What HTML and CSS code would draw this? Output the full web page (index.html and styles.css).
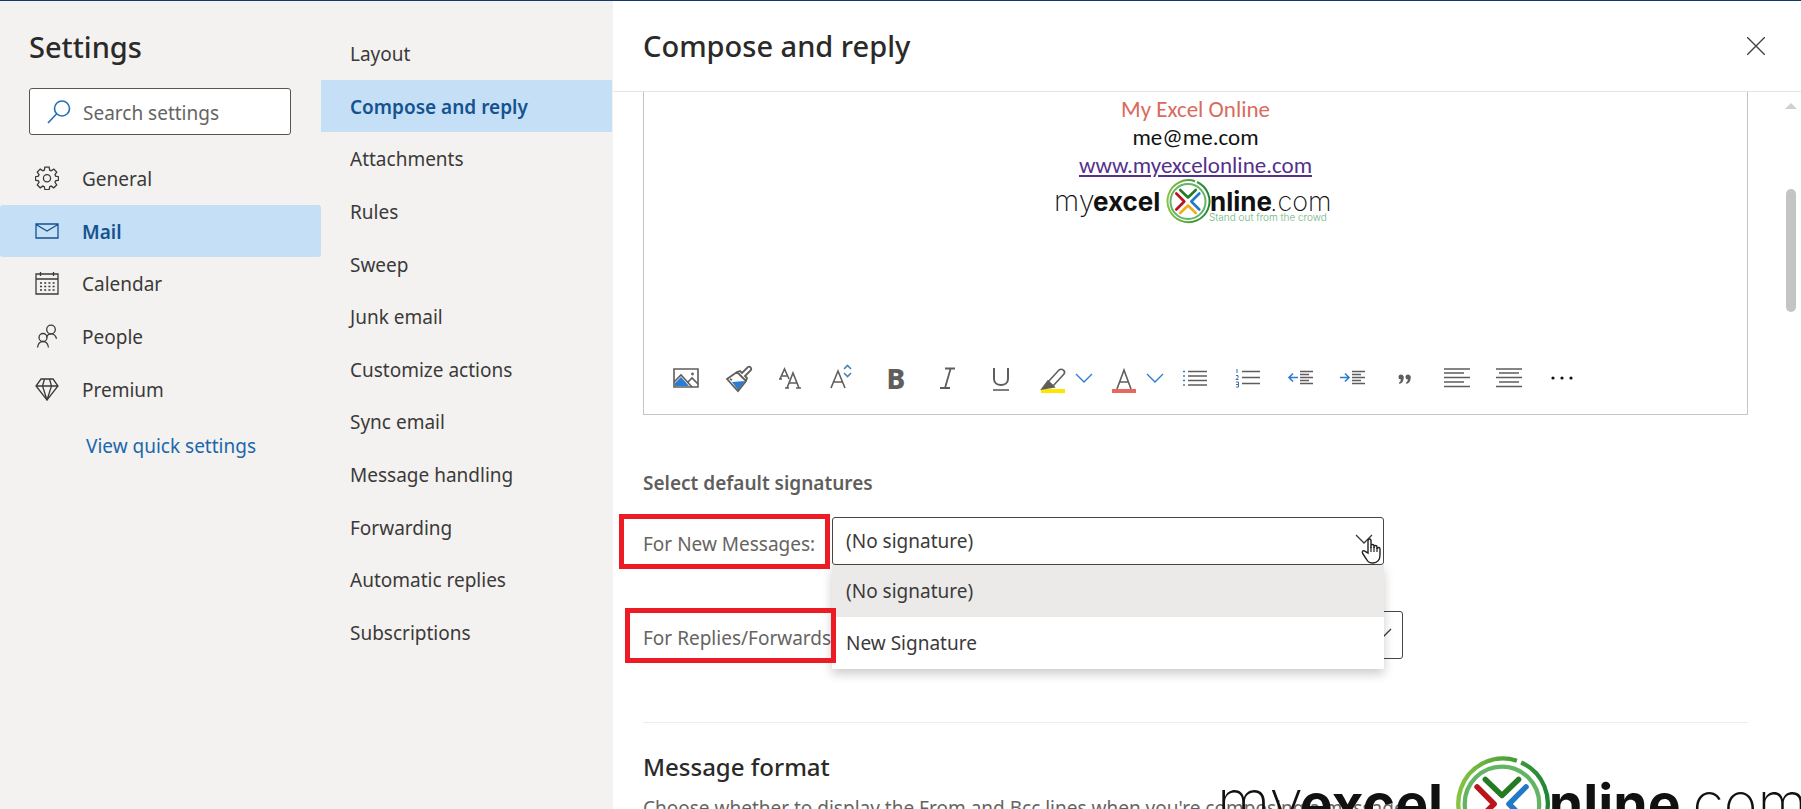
FILE: index.html
```
<!DOCTYPE html>
<html lang="en">
<head>
    <meta charset="UTF-8">
    <meta name="viewport" content="width=device-width, initial-scale=1.0">
    <title>Settings - Compose and reply</title>
    <link rel="stylesheet" href="styles.css">
</head>
<body>
    <!-- shared shapes -->
    <svg class="defs" width="0" height="0" aria-hidden="true">
        <defs>
            <linearGradient id="ring" x1="0" y1="0" x2="1" y2="0">
                <stop offset="0" stop-color="#86c440"/>
                <stop offset="1" stop-color="#1f8535"/>
            </linearGradient>
            <symbol id="chevron" viewBox="0 0 18 10">
                <path d="M1 1l8 8 8-8" fill="none" stroke="currentColor" stroke-width="1.3"/>
            </symbol>
            <symbol id="logo" viewBox="0 0 280 46">
                <g font-family="Inter, sans-serif" fill="#111">
                    <text x="-2" y="32" font-size="29" font-weight="200">my</text>
                    <text x="37" y="32" font-size="26" font-weight="700">excel</text>
                    <text x="154" y="32" font-size="26" font-weight="700">nline</text>
                    <text x="214" y="32" font-size="27" font-weight="200">.com</text>
                    <text x="153" y="42" font-size="10" font-weight="300" fill="#6cb57c">Stand out from the crowd</text>
                </g>
                <g fill="none">
                    <path d="M139 2.200A21 21 0 1 0 152 30A21 21 0 0 0 141 3" stroke="url(#ring)" stroke-width="2"/>
                    <circle cx="132" cy="22.500" r="17.500" stroke="#63b465" stroke-width="2"/>
                    <g stroke-width="2.600" stroke-linecap="round" stroke-linejoin="round">
                        <path d="M124.200 11l7.800 7.500 7.800-7.500" stroke="#257b22"/>
                        <path d="M120.300 14.500l8 8-8 8" stroke="#b9151c"/>
                        <path d="M143.300 14.500l-8 8 8 8" stroke="#2478c8"/>
                        <path d="M124.200 34l7.800-7.500 7.800 7.500" stroke="#f2ab1d"/>
                    </g>
                </g>
            </symbol>
        </defs>
    </svg>

    <div class="settings">
        <aside class="sidebar">
            <h1 class="title">Settings</h1>
            <label class="search">
                <svg class="search-icon" viewBox="0 0 24 24" fill="none" stroke="#2b6cb5" stroke-width="1.6"><circle cx="15" cy="8.500" r="7.500"/><path d="M9.700 13.800L1 23"/></svg>
                <input type="search" placeholder="Search settings" aria-label="Search settings">
            </label>
            <nav class="nav-list">
                <a class="nav-item" href="#general">
                    <svg viewBox="0 0 24 24"><path d="M9.900 1.200h4.200l.6 3 1.500.6 2.600-1.700 2.900 2.900-1.700 2.600.6 1.500 2.900.6v3.400l-2.900.7-.6 1.500 1.700 2.600-2.900 2.900-2.600-1.700-1.500.6-.6 2.900H9.900l-.6-2.900-1.500-.6-2.600 1.700-2.900-2.900L4 16.300l-.6-1.500-2.900-.7v-3.400l2.900-.6L4 8.600 2.300 6l2.900-2.900 2.600 1.700 1.500-.6z"/><circle cx="12" cy="12.200" r="3.600"/></svg>
                    <span>General</span>
                </a>
                <a class="nav-item active" href="#mail">
                    <svg viewBox="0 0 24 24"><path d="M1 5h22v14H1zM1 5.500l11 6.500 11-6.500"/></svg>
                    <span>Mail</span>
                </a>
                <a class="nav-item" href="#calendar">
                    <svg viewBox="0 0 24 24"><path d="M1 3h22v20H1zM1 8h22M5.500 1v4M18.500 1v4"/><path d="M5 12h15M5 15.500h15M5 19h15" stroke-dasharray="2 2.200" stroke-width="1.600"/></svg>
                    <span>Calendar</span>
                </a>
                <a class="nav-item" href="#people">
                    <svg viewBox="0 0 24 24"><circle cx="16" cy="5.500" r="4.300"/><circle cx="8" cy="13.500" r="4"/><path d="M11.500 13.500c.8-2.600 2.400-3.700 4.500-3.700 3 0 4.800 1.800 5.500 5M2.500 23.500c.5-3.700 2.500-6 5.500-6s5 2.300 5.500 6"/></svg>
                    <span>People</span>
                </a>
                <a class="nav-item" href="#premium">
                    <svg viewBox="0 0 24 24"><path d="M6 2h12l5 7-11 14L1 9zM1 9h22M9.500 2L7.500 9 12 23l4.500-14-2-7"/></svg>
                    <span>Premium</span>
                </a>
            </nav>
            <a class="quick-link" href="#quick">View quick settings</a>
        </aside>

        <nav class="subnav">
            <a href="#layout">Layout</a>
            <a class="active" href="#compose">Compose and reply</a>
            <a href="#attachments">Attachments</a>
            <a href="#rules">Rules</a>
            <a href="#sweep">Sweep</a>
            <a href="#junk">Junk email</a>
            <a href="#actions">Customize actions</a>
            <a href="#sync">Sync email</a>
            <a href="#handling">Message handling</a>
            <a href="#forwarding">Forwarding</a>
            <a href="#replies">Automatic replies</a>
            <a href="#subscriptions">Subscriptions</a>
        </nav>

        <main class="panel">
            <header class="panel-header">
                <h2 class="title">Compose and reply</h2>
                <button class="close" aria-label="Close">
                    <svg viewBox="0 0 18 18"><path d="M0 0l18 18M18 0L0 18" stroke="#444" stroke-width="1.4"/></svg>
                </button>
            </header>

            <div class="panel-body">
                <div class="content">
                    <section class="editor">
                        <div class="signature">
                            <p class="sig-name">My Excel Online</p>
                            <p>me@me.com</p>
                            <p><a href="#site">www.myexcelonline.com</a></p>
                            <svg class="sig-logo" role="img" aria-label="myexcelonline.com"><use href="#logo"/></svg>
                        </div>

                        <div class="toolbar">
                            <div class="tools tools-left">
                                <button aria-label="Insert picture"><svg viewBox="0 0 28 28"><path d="M2 5h24v18H2z"/><path d="M3 22v-3l6-6 8 9z" fill="#2b7cd3" stroke="none"/><path d="M2 18l7-7 11 12M16 18l4-4 6 6"/><circle cx="20.500" cy="10" r=".6"/></svg></button>
                                <button aria-label="Format painter"><svg viewBox="0 0 28 28"><path d="M7 18l13-1-7 9z" fill="#2b7cd3" stroke="none"/><path d="M2 15l10-7 3-1 2 2 6-6c2-1 4 1 3 3l-6 6 2 2-1 3-8 10zM12 8l9 9M5 15l2 1" stroke-width="1.800"/></svg></button>
                                <button aria-label="Font"><svg viewBox="0 0 28 28"><path d="M3 15L7.500 5 12 15M5 12h5M10 24l6-15 6 15M12 19h8M2 15h3M8 24h4M19 24h5"/></svg></button>
                                <button aria-label="Font size"><svg viewBox="0 0 28 28"><path d="M2 24L9 7l7 17M4.500 18h9"/><path d="M15 5l3.500-3.500L22 5M15 9l3.500 3.500L22 9" stroke="#4c83b6"/></svg></button>
                                <button class="bold" aria-label="Bold">B</button>
                                <button aria-label="Italic"><svg viewBox="0 0 28 28"><path d="M11 4.500h10M6 24h10M16.500 5l-5.500 19" stroke-width="1.800"/></svg></button>
                                <button aria-label="Underline"><svg viewBox="0 0 28 28"><path d="M7 4v11c0 8 14 8 14 0V4" stroke-width="2"/><path d="M6 26h16"/></svg></button>
                            </div>
                            <div class="split">
                                <button aria-label="Highlight"><svg viewBox="0 0 28 28"><path d="M2 25h24v4H2z" fill="#ffe600" stroke="none"/><path d="M9 18L20 6c3-2 7 1 5 4L14 22z"/><path d="M3 25l6-8 6 6z" fill="#605e5c"/></svg></button>
                                <button class="arrow" aria-label="Highlight colors"><svg><use href="#chevron"/></svg></button>
                            </div>
                            <div class="split">
                                <button aria-label="Font color"><svg viewBox="0 0 28 28"><path d="M2 25h24v4H2z" fill="#e8685e" stroke="none"/><path d="M7 25l7-19 7 19M10 18h8"/></svg></button>
                                <button class="arrow" aria-label="Font colors"><svg><use href="#chevron"/></svg></button>
                            </div>
                            <div class="tools tools-right">
                                <button aria-label="Bullets"><svg viewBox="0 -1 28 28"><path d="M7 6.500h19M7 11h19M7 15.500h19M7 20h19"/><path d="M2 6.500h2M2 11h2M2 15.500h2M2 20h2" stroke="#3f7fc0"/></svg></button>
                                <button aria-label="Numbering"><svg viewBox="0 -1 28 28"><path d="M8 6.500h18M8 12.500h18M8 18.500h18"/><path d="M3 4v4M2 10.500h2v2l-2 2h2.500M2 17h2.500v5H2M2 19.500h2" stroke="#3f6fa8" stroke-width="1"/></svg></button>
                                <button aria-label="Decrease indent"><svg viewBox="0 -1 28 28"><path d="M14 6.500h13M14 9.500h9M14 12.500h13M14 15.500h9M14 18.500h13"/><path d="M12 12.500H3M7 8.500l-4 4 4 4" stroke="#2b7cd3"/></svg></button>
                                <button aria-label="Increase indent"><svg viewBox="0 -1 28 28"><path d="M14 6.500h13M14 9.500h9M14 12.500h13M14 15.500h9M14 18.500h13"/><path d="M2 12.500h9M7 8.500l4 4-4 4" stroke="#2b7cd3"/></svg></button>
                                <button aria-label="Quote"><svg viewBox="0 -1 28 28"><g fill="#605e5c" stroke="none"><circle cx="10" cy="12" r="2.500"/><path d="M12.500 11c.5 5-1 7-4 8l-.5-1.500c1.500-1 2-2 2-4z"/><circle cx="17" cy="12" r="2.500"/><path d="M19.500 11c.5 5-1 7-4 8l-.5-1.500c1.500-1 2-2 2-4z"/></g></svg></button>
                                <button aria-label="Align left"><svg viewBox="0 0 28 28"><path d="M1 5h26M1 9h20M1 13.500h26M1 18h20M1 22.500h26"/></svg></button>
                                <button aria-label="Align center"><svg viewBox="0 0 28 28"><path d="M1 5h26M4 9h20M1 13.500h26M4 18h20M1 22.500h26"/></svg></button>
                                <button aria-label="More options"><svg viewBox="0 0 28 28"><g fill="#111" stroke="none"><circle cx="5" cy="14" r="1.600"/><circle cx="14" cy="14" r="1.600"/><circle cx="23" cy="14" r="1.600"/></g></svg></button>
                            </div>
                        </div>
                    </section>

                    <section class="defaults">
                        <h3 class="section-label">Select default signatures</h3>
                        <div class="field">
                            <label class="field-label" for="newMessages">For New Messages:</label>
                            <div class="select-box">
                                <select id="newMessages">
                                    <option>(No signature)</option>
                                    <option>New Signature</option>
                                </select>
                                <svg class="select-arrow"><use href="#chevron"/></svg>
                                <ul class="menu">
                                    <li><button class="selected">(No signature)</button></li>
                                    <li><button>New Signature</button></li>
                                </ul>
                                <svg class="pointer" viewBox="0 0 20 26"><path d="M7 15V3c0-2.700 3-2.700 3 0v7-2c0-2 3-2 3 0v2-1c0-2 3-2 3 0v2c0-2 3-2 3 0v6c0 5-3 8-7 8-3 0-5-1-6-3l-4-6c-2-3 1-4.500 3-2z" fill="#fff" stroke="#222" stroke-width="1.400"/><path d="M10 9v5M13 9v5M16 10v4" stroke="#222" stroke-width="1.200"/></svg>
                            </div>
                            <span class="mark"></span>
                        </div>
                        <div class="field field-replies">
                            <label class="field-label" for="replies">For Replies/Forwards:</label>
                            <div class="select-box">
                                <select id="replies">
                                    <option>(No signature)</option>
                                    <option>New Signature</option>
                                </select>
                                <svg class="select-arrow"><use href="#chevron"/></svg>
                            </div>
                            <span class="mark"></span>
                        </div>
                    </section>

                    <section class="format">
                        <h3>Message format</h3>
                        <p>Choose whether to display the From and Bcc lines when you're composing a message.</p>
                    </section>
                </div>
                <div class="scrollbar">
                    <span class="scroll-up"></span>
                    <span class="scroll-thumb"></span>
                </div>
            </div>
        </main>
    </div>
    <svg class="watermark" role="img" aria-label="myexcelonline.com"><use href="#logo"/></svg>
</body>
</html>
```
FILE: styles.css
```
:root {
    --accent: #14538f;
    --selected: #c5dff6;
    --text: #3b3a39;
    --muted: #666462;
    --border: #c4c4c4;
}

* {
    box-sizing: border-box;
}

body {
    margin: 0;
    height: 100vh;
    overflow: hidden;
    position: relative;
    font-family: 'Segoe UI', 'Noto Sans', sans-serif;
    font-size: 19px;
    line-height: 28px;
    color: var(--text);
    background: #fff;
    border-top: 1px solid #123a66;
}

h1, h2, h3, p, ul {
    margin: 0;
    padding: 0;
}

a {
    color: inherit;
    text-decoration: none;
}

button {
    border: none;
    background: none;
    padding: 0;
    font: inherit;
    color: inherit;
    cursor: pointer;
}

.defs {
    position: absolute;
}

.settings {
    display: flex;
    height: 100%;
}

.title {
    font-size: 29px;
    font-weight: 500;
    line-height: 40px;
    color: #2b2a29;
}

/* left column */
.sidebar {
    width: 321px;
    background: #f3f2f1;
    padding-top: 26px;
}

.sidebar .title {
    padding-left: 29px;
}

.search {
    display: flex;
    align-items: center;
    gap: 12px;
    height: 47px;
    margin: 21px 30px 17px 29px;
    padding: 0 16px 0 17px;
    background: #fff;
    border: 1px solid #555;
    border-radius: 3px;
}

.search-icon {
    flex: none;
    width: 24px;
    height: 24px;
}

.search input {
    flex: 1;
    min-width: 0;
    border: none;
    outline: none;
    padding: 2px 0 0;
    font: inherit;
    background: none;
}

.search input::placeholder {
    color: var(--muted);
}

.nav-list {
    display: grid;
    grid-auto-rows: 1fr;
    height: 263px;
}

.nav-item {
    display: flex;
    align-items: center;
    gap: 23px;
    padding-left: 35px;
}

.nav-item span {
    padding-top: 2px;
}

.nav-item svg {
    width: 24px;
    height: 24px;
    fill: none;
    stroke: currentColor;
    stroke-width: 1.3;
}

.active {
    background: var(--selected);
    color: var(--accent);
    font-weight: 600;
    border-radius: 3px;
}

.quick-link {
    display: block;
    margin: 17px 0 0 86px;
    color: #1c66ab;
}

.subnav {
    display: grid;
    grid-auto-rows: 1fr;
    width: 292px;
    height: 100%;
    padding: 26px 1px 151px 0;
    background: #f3f2f1;
}

.subnav a {
    display: flex;
    align-items: center;
    padding: 2px 0 0 29px;
}

.subnav .active {
    border-radius: 0;
}

/* right panel */
.panel {
    flex: 1;
    min-width: 0;
    display: flex;
    flex-direction: column;
}

.panel-header {
    flex: none;
    display: flex;
    align-items: center;
    justify-content: space-between;
    height: 91px;
    padding: 0 36px 0 30px;
    border-bottom: 1px solid #e4e4e4;
}

.close svg {
    display: block;
    width: 18px;
    height: 18px;
}

.panel-body {
    flex: 1;
    min-height: 0;
    display: flex;
    overflow: hidden;
}

.content {
    flex: 1;
    min-width: 0;
    padding: 0 37px 0 30px;
}

.editor {
    border: 1px solid var(--border);
    border-top: none;
}

.signature {
    height: 250px;
    padding-top: 3px;
    text-align: center;
    font-family: Calibri, Lato, sans-serif;
    font-size: 23px;
    color: #111;
}

.signature a {
    color: #54318a;
    text-decoration: underline;
}

.signature .sig-name {
    color: #d96a60;
}

.sig-logo {
    width: 280px;
    height: 46px;
}

.toolbar {
    display: flex;
    height: 72px;
    padding-left: 16px;
    color: #605e5c;
}

.tools {
    display: grid;
    grid-auto-flow: column;
    grid-auto-columns: 1fr;
}

.tools-left {
    width: 367px;
}

.tools-right {
    width: 419px;
}

.toolbar svg {
    display: block;
    width: 28px;
    height: 28px;
    margin: 0 auto;
    fill: none;
    stroke: #605e5c;
    stroke-width: 1.6;
    overflow: visible;
}

.bold {
    font-size: 28px;
    font-weight: 800;
}

.split {
    display: flex;
    width: 71px;
    padding-left: 12px;
}

.split .arrow {
    padding-left: 8px;
    color: #2b7cd3;
}

.split .arrow svg {
    width: 18px;
    height: 10px;
    stroke: none;
}

/* default signatures */
.section-label {
    margin: 54px 0 20px;
    font-size: 19px;
    font-weight: 600;
    color: #605e5c;
}

.field {
    position: relative;
    display: flex;
    margin-bottom: 46px;
}

.field-label {
    width: 189px;
    padding-top: 13px;
    color: var(--muted);
    white-space: nowrap;
}

.field-replies .field-label {
    width: 208px;
}

.select-box {
    position: relative;
    width: 552px;
}

.select-box select {
    display: block;
    appearance: none;
    width: 100%;
    height: 48px;
    padding: 0 40px 0 13px;
    font: inherit;
    color: var(--text);
    background: #fff;
    border: 1px solid #484644;
    border-radius: 3px;
}

.select-arrow {
    position: absolute;
    right: 11px;
    top: 17px;
    width: 18px;
    height: 10px;
}

.menu {
    position: absolute;
    z-index: 1;
    top: 48px;
    left: 0;
    width: 100%;
    list-style: none;
    background: #fff;
    box-shadow: 0 5px 10px rgba(0, 0, 0, 0.2);
}

.menu button {
    display: block;
    width: 100%;
    height: 52px;
    padding-left: 14px;
    text-align: left;
}

.menu .selected {
    background: #ebeae9;
}

.pointer {
    position: absolute;
    z-index: 2;
    right: 3px;
    top: 21px;
    width: 20px;
    height: 26px;
}

/* red frames round the two labels */
.mark {
    position: absolute;
    z-index: 3;
    left: -24px;
    top: -3px;
    width: 211px;
    height: 55px;
    border: 5px solid #ed1c24;
    pointer-events: none;
}

.field-replies .mark {
    left: -18px;
}

.format {
    margin-top: 63px;
    padding-top: 30px;
    border-top: 1px solid #ececec;
}

.format h3 {
    font-size: 24px;
    font-weight: 500;
    color: #2b2a29;
}

.format p {
    margin-top: 13px;
    color: var(--muted);
    white-space: nowrap;
}

.scrollbar {
    display: flex;
    flex-direction: column;
    align-items: center;
    gap: 80px;
    width: 16px;
    padding: 11px 5px 0 0;
}

.scroll-up {
    border: 6px solid transparent;
    border-top: none;
    border-bottom-color: #d0d0d0;
}

.scroll-thumb {
    width: 10px;
    height: 123px;
    border-radius: 5px;
    background: #c4c4c4;
}

.watermark {
    position: absolute;
    left: 1221px;
    top: 755px;
    width: 596px;
    height: 98px;
    pointer-events: none;
}
```
